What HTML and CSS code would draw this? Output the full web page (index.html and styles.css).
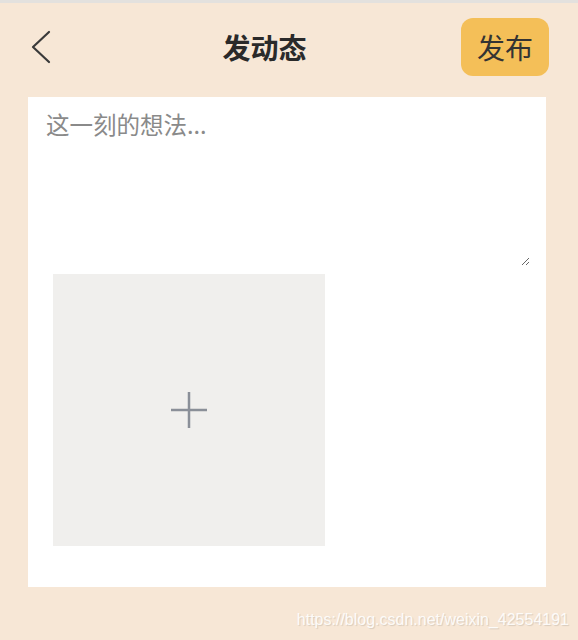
FILE: index.html
```html
<!DOCTYPE html>
<html lang="zh">
<head>
<meta charset="utf-8">
<title>发动态</title>
<link rel="stylesheet" href="styles.css">
</head>
<body>
<div class="page">
  <header class="nav">
    <div class="back">
      <svg width="20" height="34" viewBox="0 0 20 34" aria-hidden="true">
        <polyline points="18,2 2,17 18,32" fill="none" stroke="#3a3a3a" stroke-width="2.2" stroke-linecap="round" stroke-linejoin="round"/>
      </svg>
    </div>
    <h1 class="title">发动态</h1>
    <button class="publish">发布</button>
  </header>
  <main class="card">
    <textarea class="thought" placeholder="这一刻的想法..."></textarea>
    <div class="upload">
      <svg width="38" height="38" viewBox="0 0 38 38" aria-hidden="true">
        <line x1="1" y1="19" x2="37" y2="19" stroke="#8a8f98" stroke-width="2.5"/>
        <line x1="19" y1="1" x2="19" y2="37" stroke="#8a8f98" stroke-width="2.5"/>
      </svg>
    </div>
  </main>
  <div class="watermark">https://blog.csdn.net/weixin_42554191</div>
</div>
</body>
</html>
```

FILE: styles.css
```css
html, body {
  margin: 0;
  padding: 0;
}
body {
  background: #f7e7d6;
  font-family: "Noto Sans CJK SC", "Noto Sans", sans-serif;
}
.page {
  position: relative;
  width: 578px;
  height: 640px;
  border-top: 3px solid #e3e1de;
  box-sizing: border-box;
  overflow: hidden;
}
.nav {
  display: flex;
  align-items: center;
  height: 88px;
  padding: 0 29px 0 28px;
}
.back {
  width: 40px;
  display: flex;
  align-items: center;
  padding-left: 3px;
  box-sizing: border-box;
}
.back svg {
  display: block;
}
.title {
  flex: 1;
  margin: 0;
  text-align: center;
  font-size: 28px;
  font-weight: 700;
  color: #2a2a2a;
  line-height: 1;
}
.publish {
  width: 88px;
  height: 58px;
  border: none;
  border-radius: 12px;
  background: #f4bf58;
  color: #333;
  font-family: "Noto Sans CJK SC", sans-serif;
  font-size: 28px;
  padding: 0;
  line-height: 1;
}
.card {
  margin: 6px 32px 0 28px;
  height: 490px;
  background: #fff;
  overflow: hidden;
}
.thought {
  display: block;
  width: 484px;
  height: 158px;
  margin: 11px 0 0 18px;
  padding: 0;
  border: none;
  outline: none;
  background: transparent;
  font-family: "Noto Sans CJK SC", sans-serif;
  font-size: 23.5px;
  line-height: 1.4;
  color: #333;
}
.thought::placeholder {
  color: #8a8a8a;
}
.upload {
  width: 272px;
  height: 272px;
  margin: 8px 0 0 25px;
  background: #f0efed;
  display: flex;
  align-items: center;
  justify-content: center;
}
.watermark {
  position: absolute;
  right: 9px;
  top: 608px;
  font-family: "Liberation Sans", Arial, sans-serif;
  font-size: 16px;
  color: rgba(255, 255, 255, 0.9);
  text-shadow: 1px 1px 1px rgba(0, 0, 0, 0.12);
}
```
